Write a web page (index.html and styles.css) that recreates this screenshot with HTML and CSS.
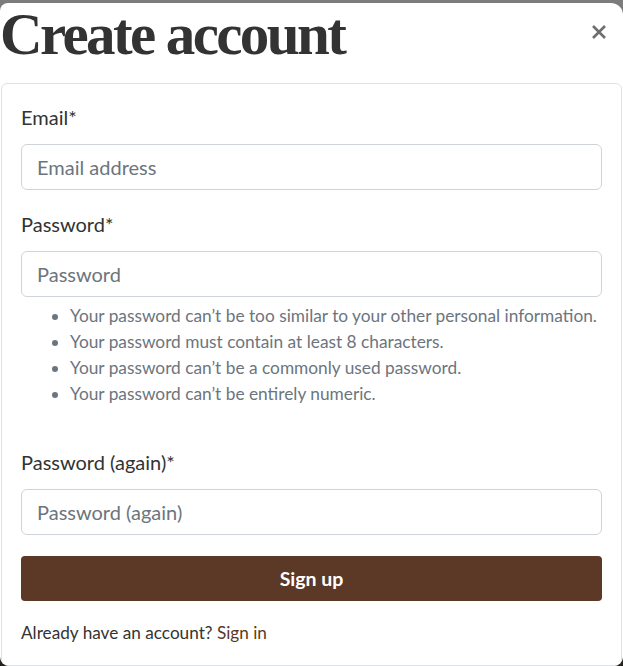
FILE: index.html
```html
<!DOCTYPE html>
<html lang="en">
<head>
<meta charset="utf-8">
<title>Create account</title>
<link rel="stylesheet" href="styles.css">
</head>
<body>
<div class="modal">
  <div class="modal-header">
    <h1 class="modal-title">Create account</h1>
    <button class="close" type="button" aria-label="Close">
      <svg width="16" height="16" viewBox="0 0 16 16"><path d="M2 2 L14 14 M14 2 L2 14" stroke="#6e6e6e" stroke-width="2.6" stroke-linecap="butt" fill="none"/></svg>
    </button>
  </div>
  <div class="card">
    <form class="form">
      <div class="field">
        <label class="label" for="email">Email*</label>
        <input class="input" id="email" type="email" placeholder="Email address">
      </div>
      <div class="field">
        <label class="label" for="pw1">Password*</label>
        <input class="input" id="pw1" type="password" placeholder="Password">
        <ul class="help">
          <li>Your password can’t be too similar to your other personal information.</li>
          <li>Your password must contain at least 8 characters.</li>
          <li>Your password can’t be a commonly used password.</li>
          <li>Your password can’t be entirely numeric.</li>
        </ul>
      </div>
      <div class="field field-last">
        <label class="label" for="pw2">Password (again)*</label>
        <input class="input" id="pw2" type="password" placeholder="Password (again)">
      </div>
      <button class="submit" type="button">Sign up</button>
      <p class="footer">Already have an account? <a class="link" href="#">Sign in</a></p>
    </form>
  </div>
</div>
</body>
</html>
```
FILE: styles.css
```css
html {
  height: 100%;
  background: linear-gradient(#7c7c7c 0%, #4a4643 50%, #27221e 100%);
}
body {
  margin: 0;
  height: 100%;
  overflow: hidden;
  font-family: Lato, "Noto Sans", sans-serif;
  color: #333;
}
.modal {
  margin-top: 3px;
  height: 663px;
  background: #fff;
  border-radius: 8px 12px 9px 9px;
  overflow: hidden;
  display: flex;
  flex-direction: column;
}
.modal-header {
  flex-shrink: 0;
  height: 80px;
  box-sizing: border-box;
  display: flex;
  justify-content: space-between;
  align-items: flex-start;
}
.modal-title {
  margin: 0;
  padding-right: 4px;
  font-family: "Liberation Serif", "Times New Roman", serif;
  font-weight: 700;
  font-size: 59px;
  line-height: 62px;
  letter-spacing: -2.6px;
  white-space: nowrap;
  color: #333;
}
.close {
  margin: 21px 16px 0 0;
  padding: 0;
  border: 0;
  background: none;
  width: 16px;
  height: 16px;
  display: block;
}
.close svg { display: block; }
.card {
  flex: 1 0 auto;
  margin: 0 1px;
  border: 1px solid #dee2e6;
  border-radius: 6px;
  padding: 20px 19px;
}
.form {
  display: flex;
  flex-direction: column;
}
.field {
  display: flex;
  flex-direction: column;
  margin-bottom: 21px;
}
.label {
  font-size: 20px;
  line-height: 27px;
  margin-bottom: 13px;
}
.input {
  height: 46px;
  box-sizing: border-box;
  border: 1px solid #ced4da;
  border-radius: 6px;
  padding: 0 15px;
  font-family: Lato, "Noto Sans", sans-serif;
  font-size: 20px;
  color: #333;
}
.input::placeholder { color: #6c757d; opacity: 1; }
.help {
  margin: 6px 0 21px;
  padding-left: 49px;
  font-size: 17.3px;
  line-height: 26px;
  white-space: nowrap;
  color: #6c757d;
}
.field-last { margin-bottom: 21px; }
.submit {
  height: 45px;
  border: 0;
  border-radius: 4px;
  background: #5c3826;
  color: #fff;
  font-family: Lato, "Noto Sans", sans-serif;
  font-size: 19.5px;
  font-weight: 700;
}
.footer {
  margin: 20px 0 0;
  font-size: 17.2px;
  line-height: 24px;
}
.link {
  color: #5c3826;
  text-decoration: none;
}
```
